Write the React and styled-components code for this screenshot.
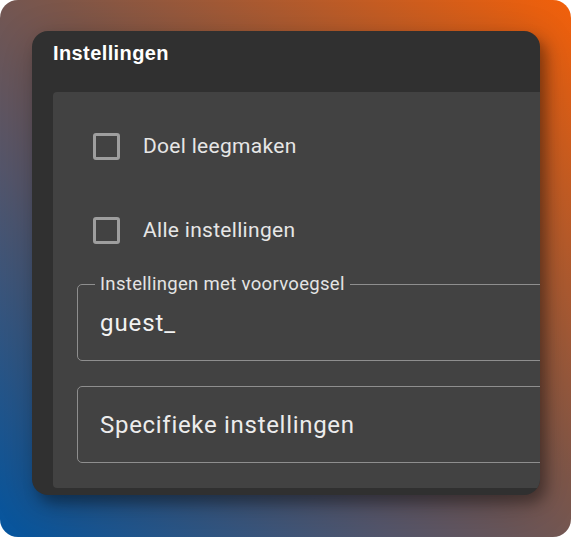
import React from 'react';
import styled, { createGlobalStyle } from 'styled-components';

const GlobalStyle = createGlobalStyle`
    html, body {
        margin: 0;
        padding: 0;
        background: #ffffff;
    }
    * {
        box-sizing: border-box;
    }
`;

const Backdrop = styled.div`
    width: 571px;
    height: 537px;
    border-radius: 18px;
    overflow: hidden;
    padding: 31px 0 0 32px;
    background: linear-gradient(to top right, #04559f 0%, #56566a 35%, #7d5649 55%, #f2600a 100%);
`;

const Dialog = styled.div`
    width: 508px;
    height: 464px;
    border-radius: 16px;
    background: #303030;
    overflow: hidden;
    box-shadow: 6px 8px 14px rgba(0, 0, 0, 0.35), 0 10px 40px rgba(0, 0, 0, 0.2);
    display: flex;
    flex-direction: column;
`;

const Title = styled.h2`
    margin: 0;
    padding: 10px 0 27px 21px;
    font-family: "Liberation Sans", Arial, sans-serif;
    font-weight: bold;
    font-size: 20px;
    line-height: 24px;
    letter-spacing: 0.4px;
    color: #ffffff;
`;

const Panel = styled.div`
    width: 600px;
    margin-left: 21px;
    padding: 26px 0 25px 24px;
    background: #424242;
    border-radius: 4px;
    display: flex;
    flex-direction: column;
    font-family: Roboto, "Liberation Sans", sans-serif;
`;

const CheckRow = styled.label`
    display: flex;
    align-items: center;
    gap: 23px;
    height: 56px;
    padding-left: 16px;
    margin-bottom: ${props => props.gap || 0}px;
    font-size: 21px;
    letter-spacing: 0.3px;
    color: #e6e6e6;
`;

const Checkbox = styled.input`
    appearance: none;
    margin: 0;
    width: 27px;
    height: 27px;
    border: 3px solid #9e9e9e;
    border-radius: 3px;
    background: transparent;
`;

const Field = styled.fieldset`
    margin: 0 0 25px 0;
    padding: 14px 22px 23px 22px;
    border: 1px solid #8e8e8e;
    border-radius: 5px;
`;

const Legend = styled.legend`
    margin-left: -5px;
    padding: 0 5px;
    font-size: 18.5px;
    line-height: 21px;
    letter-spacing: 0.32px;
    color: #e4e4e4;
`;

const Value = styled.div`
    font-size: 24px;
    line-height: 28px;
    letter-spacing: 0.9px;
    color: #f2f2f2;
`;

const SelectBox = styled.div`
    display: flex;
    align-items: center;
    height: 77px;
    padding-left: 22px;
    border: 1px solid #8e8e8e;
    border-radius: 5px;
    font-size: 24px;
    letter-spacing: 0.7px;
    color: #ececec;
`;

export default function App() {
    return (
        <>
            <GlobalStyle />
            <Backdrop>
                <Dialog>
                    <Title>Instellingen</Title>
                    <Panel>
                        <CheckRow gap={28}>
                            <Checkbox type="checkbox" />
                            Doel leegmaken
                        </CheckRow>
                        <CheckRow gap={16}>
                            <Checkbox type="checkbox" />
                            Alle instellingen
                        </CheckRow>
                        <Field>
                            <Legend>Instellingen met voorvoegsel</Legend>
                            <Value>guest_</Value>
                        </Field>
                        <SelectBox>Specifieke instellingen</SelectBox>
                    </Panel>
                </Dialog>
            </Backdrop>
        </>
    );
}
